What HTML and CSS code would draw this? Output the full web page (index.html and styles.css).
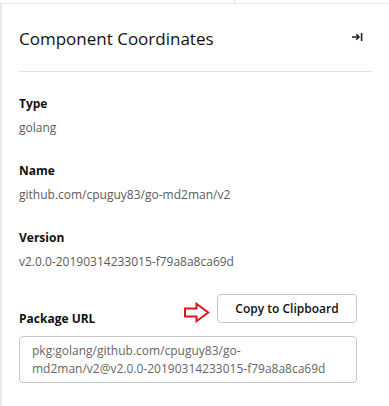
FILE: index.html
```html
<!DOCTYPE html>
<html lang="en">
<head>
    <meta charset="UTF-8">
    <title>Component Coordinates</title>
    <link rel="stylesheet" href="styles.css">
</head>
<body>
    <div class="topbar">
        <div class="topbar-left"></div>
        <div class="topbar-right"></div>
    </div>

    <div class="panel">
        <div class="panel-header">
            <h2>Component Coordinates</h2>
            <button class="collapse" title="Close">
                <svg width="11" height="8" viewBox="0 0 11 8">
                    <path d="M0 4 H7 M4.2 1.2 L7 4 L4.2 6.8" fill="none" stroke="#222" stroke-width="1.5"/>
                    <path d="M9.6 0 V8" stroke="#222" stroke-width="1.6"/>
                </svg>
            </button>
        </div>

        <div class="field">
            <div class="label">Type</div>
            <div class="value">golang</div>
        </div>
        <div class="field">
            <div class="label">Name</div>
            <div class="value">github.com/cpuguy83/go-md2man/v2</div>
        </div>
        <div class="field">
            <div class="label">Version</div>
            <div class="value">v2.0.0-20190314233015-f79a8a8ca69d</div>
        </div>

        <div class="purl">
            <div class="purl-head">
                <div class="label">Package URL</div>
                <div class="copy">
                    <svg class="hint" width="26" height="21" viewBox="0 0 26 21">
                        <path d="M1 6.5 H12.5 V1.8 L24.2 10.5 L12.5 19.2 V14.5 H1 Z" fill="none" stroke="#e0141e" stroke-width="2"/>
                    </svg>
                    <button class="copy-btn">Copy to Clipboard</button>
                </div>
            </div>
            <div class="purl-box">pkg:golang/github.com/cpuguy83/go-md2man/v2@v2.0.0-20190314233015-f79a8a8ca69d</div>
        </div>
    </div>
</body>
</html>
```

FILE: styles.css
```css
body {
    margin: 0;
    background-color: white;
    font-family: "Open Sans", "Liberation Sans", Arial, sans-serif;
    color: #1a1a1a;
}

.topbar {
    display: flex;
    height: 3px;
    border-bottom: 1px solid #e6e6f0;
}

.topbar-left {
    width: 234px;
    border-right: 1px solid #e6e6f0;
}

.panel {
    border-left: 2px solid #e8e8f5;
    padding: 0 17px 0 17px;
    height: 402px;
    box-sizing: border-box;
}

.panel-header {
    display: flex;
    justify-content: space-between;
    align-items: flex-start;
    padding-top: 23px;
    padding-bottom: 20px;
    border-bottom: 1px solid #e2e2e8;
}

.panel-header h2 {
    margin: 0;
    font-size: 17px;
    font-weight: 400;
    line-height: 24px;
    color: #111;
}

.collapse {
    display: flex;
    background: none;
    border: none;
    padding: 0;
    margin: 6px 9px 0 0;
    cursor: pointer;
}

.field {
    margin-top: 24px;
}

.field + .field {
    margin-top: 27px;
}

.label {
    font-size: 12px;
    font-weight: 700;
    line-height: 16px;
    color: #111;
}

.value {
    margin-top: 8px;
    font-size: 12px;
    line-height: 16px;
    color: #5c5c5c;
}

.purl {
    margin-top: 24px;
    margin-right: 15px;
}

.purl-head {
    display: flex;
    justify-content: space-between;
    align-items: flex-end;
}

.copy {
    display: flex;
    align-items: center;
    gap: 7px;
    margin-bottom: 4px;
}

.hint {
    margin-top: 8px;
}

.copy-btn {
    font-family: inherit;
    font-size: 12px;
    font-weight: 600;
    color: #111;
    background: white;
    border: 1px solid #c6c6c6;
    border-radius: 4px;
    width: 140px;
    height: 29px;
    padding: 0;
}

.purl-box {
    margin-top: 9px;
    border: 1px solid #c6c6c6;
    border-radius: 4px;
    padding: 5px 12px 4px 12px;
    font-size: 12px;
    line-height: 18px;
    color: #666;
}
```
